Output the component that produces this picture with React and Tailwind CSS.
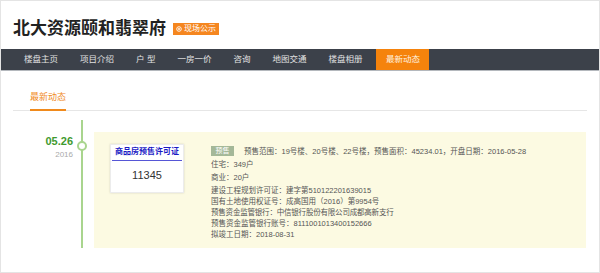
export default function App() {
  const navItems = ["楼盘主页", "项目介绍", "户 型", "一房一价", "咨询", "地图交通", "楼盘相册"];
  const font = { fontFamily: '"Liberation Sans","Noto Sans CJK SC",sans-serif' };
  return (
    <div
      className="w-[600px] h-[273px] border border-[#e4e4e4] bg-white overflow-hidden box-border"
      style={font}
    >
      {/* Header */}
      <div className="h-[48px] flex items-center pl-[12px] pt-[8px]">
        <span className="text-[17px] font-bold text-[#222] leading-[20px]">北大资源颐和翡翠府</span>
        <span className="ml-[7px] h-[12px] w-[46px] bg-[#f5861f] flex items-center pl-[3px] text-white text-[8px] leading-[12px]">
          <svg width="6" height="6" viewBox="0 0 6 6" className="mr-[2px]">
            <circle cx="3" cy="3" r="2.3" fill="none" stroke="white" strokeWidth="0.9" />
            <circle cx="3" cy="3" r="0.9" fill="white" />
          </svg>
          现场公示
        </span>
      </div>

      {/* Nav */}
      <div className="h-[22px] bg-[#3c414a] border-b border-[#b4b8bd] flex pl-[12px]">
        {navItems.map((t) => (
          <div key={t} className="px-[11px] text-[8.5px] leading-[21px] text-[#e2e2e2] whitespace-pre">
            {t}
          </div>
        ))}
        <div className="ml-[3px] px-[9.5px] text-[8.5px] leading-[21px] text-[#fff3e0] bg-[#f5830c]">最新动态</div>
      </div>

      {/* Section tab */}
      <div className="mx-[12px] border-b border-[#e6e6e6] flex pl-[17px]">
        <div className="-mb-px pt-[20px] pb-[6px] border-b-2 border-[#f08a1c] text-[9px] leading-[12px] text-[#f08a1c]">
          最新动态
        </div>
      </div>

      {/* Timeline */}
      <div className="flex mt-[9px]">
        <div className="w-[72px] text-right pt-[15px]">
          <div className="text-[11px] font-bold leading-[13px] text-[#3f9a2f]">05.26</div>
          <div className="mt-[2px] text-[8px] leading-[10px] text-[#aaa]">2016</div>
        </div>
        <div className="w-[18px] relative flex justify-center">
          <div className="w-[2px] bg-[#a9d58e]" />
          <div className="absolute top-[21px] left-[4px] w-[10px] h-[10px] rounded-full border-2 border-[#a9d58e] bg-white" />
        </div>
        <div className="ml-[3px] mt-[12px] w-[492px] h-[116px] bg-[#fcfae2] flex items-start pt-[12px] pl-[16px]">
          <div className="w-[74px] h-[49px] bg-white shadow-[0_0_2px_rgba(0,0,0,0.15)] border border-[#ececec] flex flex-col items-center">
            <div className="mt-[2px] w-[70px] text-center text-[8px] font-bold leading-[10px] pb-[3px] border-b border-[#5656d6] text-[#1a1ac4]">
              商品房预售许可证
            </div>
            <div className="mt-[7px] text-[11px] leading-[14px] text-[#333]">11345</div>
          </div>
          <div className="ml-[27px] text-[7.5px] text-[#555] pt-[0.5px]">
            <div className="leading-[13px] flex items-center">
              <span className="w-[23px] h-[10px] bg-[#a4b898] text-white text-[7px] leading-[10px] text-center mr-[10px]">预售</span>
              预售范围：19号楼、20号楼、22号楼，预售面积：45234.01，开盘日期：2016-05-28
            </div>
            <div className="leading-[13px]">住宅：349户</div>
            <div className="leading-[13px] mb-[1px]">商业：20户</div>
            <div className="leading-[11px]">建设工程规划许可证：建字第510122201639015</div>
            <div className="leading-[11px]">国有土地使用权证号：成高国用（2016）第9954号</div>
            <div className="leading-[11px] tracking-[-0.2px]">预售资金监管银行：中信银行股份有限公司成都高新支行</div>
            <div className="leading-[11px]">预售资金监管银行账号：8111001013400152666</div>
            <div className="leading-[11px]">拟竣工日期：2018-08-31</div>
          </div>
        </div>
      </div>
    </div>
  );
}
